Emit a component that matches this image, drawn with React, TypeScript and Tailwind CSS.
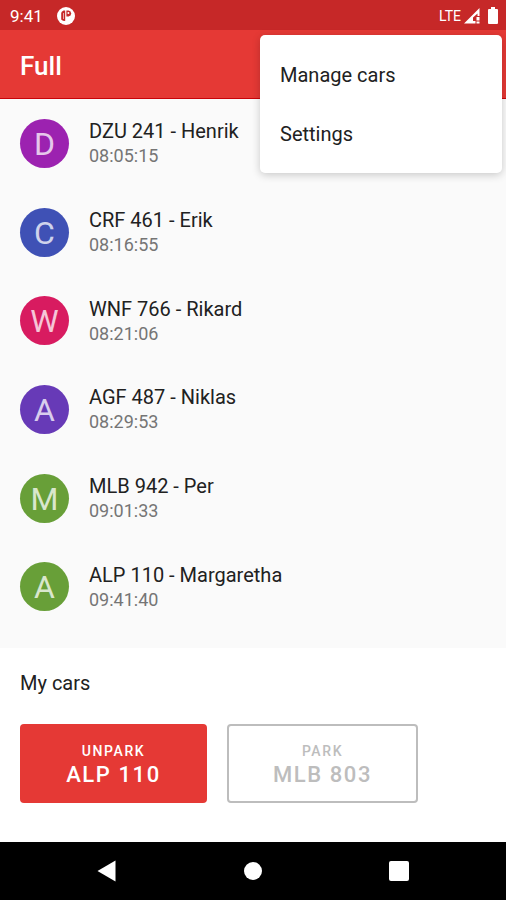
interface ParkedCar {
  plate: string
  owner: string
  time: string
  color: string
}

const PARKED_CARS: ParkedCar[] = [
  { plate: 'DZU 241', owner: 'Henrik', time: '08:05:15', color: 'bg-[#9c22b0]' },
  { plate: 'CRF 461', owner: 'Erik', time: '08:16:55', color: 'bg-[#3f51b5]' },
  { plate: 'WNF 766', owner: 'Rikard', time: '08:21:06', color: 'bg-[#d81b60]' },
  { plate: 'AGF 487', owner: 'Niklas', time: '08:29:53', color: 'bg-[#673ab7]' },
  { plate: 'MLB 942', owner: 'Per', time: '09:01:33', color: 'bg-[#689f38]' },
  { plate: 'ALP 110', owner: 'Margaretha', time: '09:41:40', color: 'bg-[#689f38]' },
]

const MENU_ITEMS = ['Manage cars', 'Settings']

function StatusBar() {
  return (
    <div className="flex h-[30px] items-center justify-between bg-[#c62828] pl-[10px] pr-2 pt-px text-white">
      <div className="flex items-center gap-[14px]">
        <span className="text-[17px] leading-5">9:41</span>
        <svg width="18" height="18" viewBox="0 0 18 18" aria-hidden="true">
          <circle cx="9" cy="9" r="9" fill="#fff" />
          <path d="M8.2 3.5H6.5Q4.2 4.5 4.2 6v6.5q1.5 1.5 4 1.5z" fill="#c62828" />
          <path d="M6 6h.6v6H6z" fill="#fff" />
          <path d="M9.4 3.5h2.2q2.6.6 2.6 3t-2.6 3H9.4z" fill="#c62828" />
          <circle cx="11.4" cy="6" r="1" fill="#fff" />
        </svg>
      </div>
      <div className="flex items-center">
        <span className="text-sm leading-5">LTE</span>
        <svg className="ml-[3px]" width="16" height="16" viewBox="0 0 16 16" aria-hidden="true">
          <path d="M0 15.5 15.5 0v8h-2V5.5L9 9.5V13h2.5v2.5z" fill="#fff" />
          <path d="M12.5 9h3v3.5h-3zM12.5 13.5h3v2h-3z" fill="#fff" />
        </svg>
        <svg className="ml-2" width="10" height="17" viewBox="0 0 10 17" aria-hidden="true">
          <path d="M3 0h4v2h2q1 0 1 1v13q0 1-1 1H1q-1 0-1-1V3q0-1 1-1h2z" fill="#fff" />
        </svg>
      </div>
    </div>
  )
}

function OverflowMenu() {
  return (
    <div
      role="menu"
      className="absolute right-1 top-[35px] z-10 flex w-[242px] flex-col rounded-[5px] bg-white py-[10px] shadow-[0_2px_8px_rgba(0,0,0,0.2)]"
    >
      {MENU_ITEMS.map(item => (
        <button
          key={item}
          role="menuitem"
          className="h-[59px] px-5 text-left text-xl text-[#212121] hover:bg-gray-100"
        >
          {item}
        </button>
      ))}
    </div>
  )
}

function CarRow({ car }: { car: ParkedCar }) {
  return (
    <li className="flex flex-1 items-center gap-5 px-5">
      <div
        className={`flex size-[49px] shrink-0 items-center justify-center rounded-full pt-px text-[32px] text-white/75 ${car.color}`}
      >
        {car.plate[0]}
      </div>
      <div className="pt-px">
        <p className="text-xl leading-[25px] text-[#212121]">
          {car.plate} - {car.owner}
        </p>
        <p className="text-lg leading-6 text-[#757575]">{car.time}</p>
      </div>
    </li>
  )
}

function NavBar() {
  return (
    <nav className="grid h-[58px] grid-cols-3 items-center bg-black px-[34px]">
      <button aria-label="Back" className="justify-self-center">
        <svg width="20" height="22" viewBox="0 0 20 22" aria-hidden="true">
          <path d="M18.5.5v21L.5 11z" fill="#fff" />
        </svg>
      </button>
      <button aria-label="Home" className="justify-self-center">
        <div className="size-[18px] rounded-full bg-white" />
      </button>
      <button aria-label="Recent apps" className="justify-self-center">
        <div className="size-5 rounded-[2px] bg-white" />
      </button>
    </nav>
  )
}

export default function App() {
  return (
    <div className="relative flex min-h-screen flex-col bg-white font-[Roboto,sans-serif]">
      <StatusBar />
      <header className="flex h-[69px] items-center border-b border-[#c8040a] bg-[#e53935] px-5 pt-1">
        <h1 className="text-[26px] font-medium text-white">Full</h1>
      </header>
      <OverflowMenu />

      <ul className="flex flex-1 flex-col bg-[#fafafa] pb-[17px]">
        {PARKED_CARS.map(car => (
          <CarRow key={car.plate} car={car} />
        ))}
      </ul>

      <section className="px-5 pb-[39px] pt-[21px]">
        <h2 className="text-xl leading-7 text-[#212121]">My cars</h2>
        <div className="mt-[27px] flex gap-5">
          <button className="flex h-[79px] w-[187px] flex-col items-center justify-center rounded-[4px] bg-[#e53935] pt-[3px] font-medium tracking-widest text-white">
            <span className="text-sm leading-5">UNPARK</span>
            <span className="text-[22px] leading-7">ALP 110</span>
          </button>
          <button
            disabled
            className="flex h-[79px] w-[191px] flex-col items-center justify-center rounded-[4px] border-2 border-[#bdbdbd] pt-[3px] font-medium tracking-widest text-[#bdbdbd]"
          >
            <span className="text-sm leading-5">PARK</span>
            <span className="text-[22px] leading-7">MLB 803</span>
          </button>
        </div>
      </section>

      <NavBar />
    </div>
  )
}
